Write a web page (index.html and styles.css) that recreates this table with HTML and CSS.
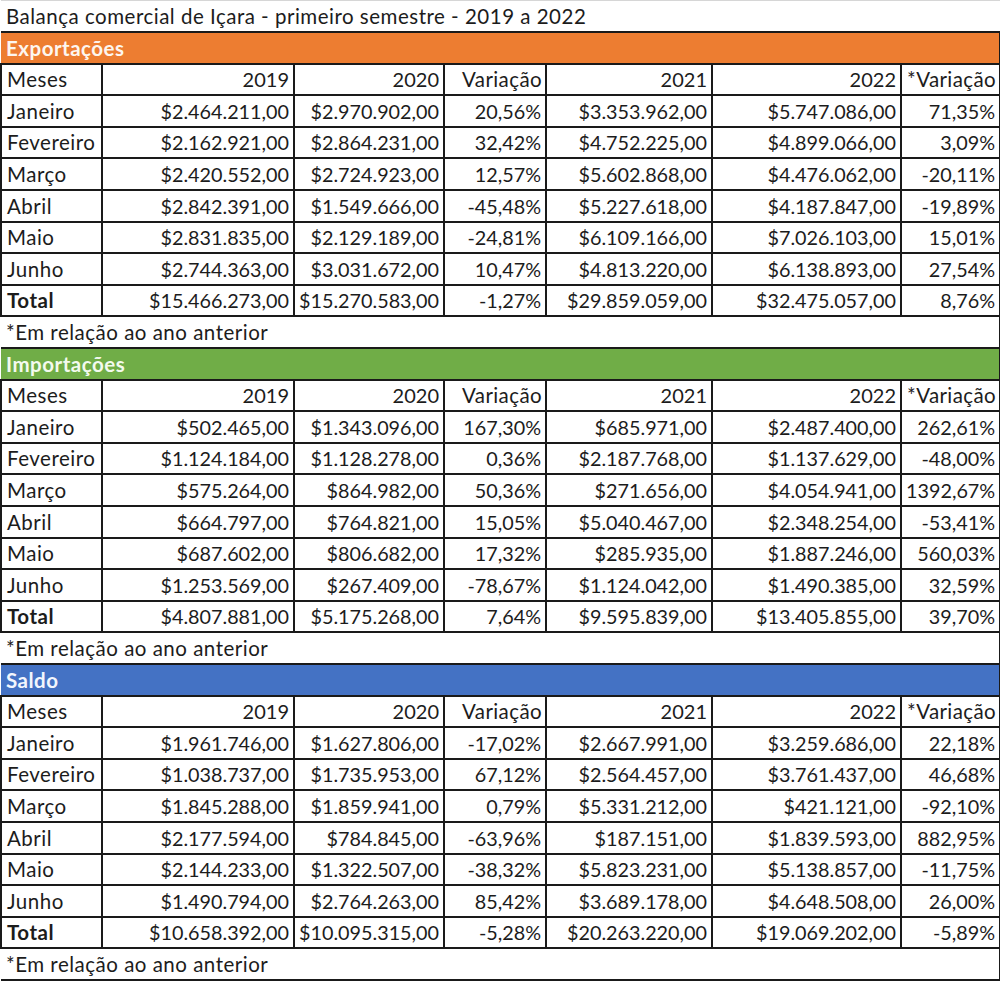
FILE: index.html
```html
<!DOCTYPE html>
<html lang="pt-BR">
<head>
<meta charset="utf-8">
<title>Balança comercial de Içara</title>
<link rel="stylesheet" href="styles.css">
</head>
<body>
<table class="sheet">
  <colgroup>
    <col class="c-mes"><col class="c-2019"><col class="c-2020"><col class="c-var"><col class="c-2021"><col class="c-2022"><col class="c-var2">
  </colgroup>
  <tbody>
    <tr class="title"><td colspan="7">Balança comercial de Içara - primeiro semestre - 2019 a 2022</td></tr>

    <tr class="band orange"><td colspan="7">Exportações</td></tr>
    <tr class="row head"><td class="l">Meses</td><td class="n">2019</td><td class="n">2020</td><td class="t">Variação</td><td class="n">2021</td><td class="n">2022</td><td class="t">*Variação</td></tr>
    <tr class="row"><td class="l">Janeiro</td><td>$2.464.211,00</td><td>$2.970.902,00</td><td>20,56%</td><td>$3.353.962,00</td><td>$5.747.086,00</td><td>71,35%</td></tr>
    <tr class="row"><td class="l">Fevereiro</td><td>$2.162.921,00</td><td>$2.864.231,00</td><td>32,42%</td><td>$4.752.225,00</td><td>$4.899.066,00</td><td>3,09%</td></tr>
    <tr class="row"><td class="l">Março</td><td>$2.420.552,00</td><td>$2.724.923,00</td><td>12,57%</td><td>$5.602.868,00</td><td>$4.476.062,00</td><td>-20,11%</td></tr>
    <tr class="row"><td class="l">Abril</td><td>$2.842.391,00</td><td>$1.549.666,00</td><td>-45,48%</td><td>$5.227.618,00</td><td>$4.187.847,00</td><td>-19,89%</td></tr>
    <tr class="row"><td class="l">Maio</td><td>$2.831.835,00</td><td>$2.129.189,00</td><td>-24,81%</td><td>$6.109.166,00</td><td>$7.026.103,00</td><td>15,01%</td></tr>
    <tr class="row"><td class="l">Junho</td><td>$2.744.363,00</td><td>$3.031.672,00</td><td>10,47%</td><td>$4.813.220,00</td><td>$6.138.893,00</td><td>27,54%</td></tr>
    <tr class="row"><td class="l b">Total</td><td>$15.466.273,00</td><td>$15.270.583,00</td><td>-1,27%</td><td>$29.859.059,00</td><td>$32.475.057,00</td><td>8,76%</td></tr>
    <tr class="note"><td colspan="7">*Em relação ao ano anterior</td></tr>

    <tr class="band green"><td colspan="7">Importações</td></tr>
    <tr class="row head"><td class="l">Meses</td><td class="n">2019</td><td class="n">2020</td><td class="t">Variação</td><td class="n">2021</td><td class="n">2022</td><td class="t">*Variação</td></tr>
    <tr class="row"><td class="l">Janeiro</td><td>$502.465,00</td><td>$1.343.096,00</td><td>167,30%</td><td>$685.971,00</td><td>$2.487.400,00</td><td>262,61%</td></tr>
    <tr class="row"><td class="l">Fevereiro</td><td>$1.124.184,00</td><td>$1.128.278,00</td><td>0,36%</td><td>$2.187.768,00</td><td>$1.137.629,00</td><td>-48,00%</td></tr>
    <tr class="row"><td class="l">Março</td><td>$575.264,00</td><td>$864.982,00</td><td>50,36%</td><td>$271.656,00</td><td>$4.054.941,00</td><td>1392,67%</td></tr>
    <tr class="row"><td class="l">Abril</td><td>$664.797,00</td><td>$764.821,00</td><td>15,05%</td><td>$5.040.467,00</td><td>$2.348.254,00</td><td>-53,41%</td></tr>
    <tr class="row"><td class="l">Maio</td><td>$687.602,00</td><td>$806.682,00</td><td>17,32%</td><td>$285.935,00</td><td>$1.887.246,00</td><td>560,03%</td></tr>
    <tr class="row"><td class="l">Junho</td><td>$1.253.569,00</td><td>$267.409,00</td><td>-78,67%</td><td>$1.124.042,00</td><td>$1.490.385,00</td><td>32,59%</td></tr>
    <tr class="row"><td class="l b">Total</td><td>$4.807.881,00</td><td>$5.175.268,00</td><td>7,64%</td><td>$9.595.839,00</td><td>$13.405.855,00</td><td>39,70%</td></tr>
    <tr class="note"><td colspan="7">*Em relação ao ano anterior</td></tr>

    <tr class="band blue"><td colspan="7">Saldo</td></tr>
    <tr class="row head"><td class="l">Meses</td><td class="n">2019</td><td class="n">2020</td><td class="t">Variação</td><td class="n">2021</td><td class="n">2022</td><td class="t">*Variação</td></tr>
    <tr class="row"><td class="l">Janeiro</td><td>$1.961.746,00</td><td>$1.627.806,00</td><td>-17,02%</td><td>$2.667.991,00</td><td>$3.259.686,00</td><td>22,18%</td></tr>
    <tr class="row"><td class="l">Fevereiro</td><td>$1.038.737,00</td><td>$1.735.953,00</td><td>67,12%</td><td>$2.564.457,00</td><td>$3.761.437,00</td><td>46,68%</td></tr>
    <tr class="row"><td class="l">Março</td><td>$1.845.288,00</td><td>$1.859.941,00</td><td>0,79%</td><td>$5.331.212,00</td><td>$421.121,00</td><td>-92,10%</td></tr>
    <tr class="row"><td class="l">Abril</td><td>$2.177.594,00</td><td>$784.845,00</td><td>-63,96%</td><td>$187.151,00</td><td>$1.839.593,00</td><td>882,95%</td></tr>
    <tr class="row"><td class="l">Maio</td><td>$2.144.233,00</td><td>$1.322.507,00</td><td>-38,32%</td><td>$5.823.231,00</td><td>$5.138.857,00</td><td>-11,75%</td></tr>
    <tr class="row"><td class="l">Junho</td><td>$1.490.794,00</td><td>$2.764.263,00</td><td>85,42%</td><td>$3.689.178,00</td><td>$4.648.508,00</td><td>26,00%</td></tr>
    <tr class="row"><td class="l b">Total</td><td>$10.658.392,00</td><td>$10.095.315,00</td><td>-5,28%</td><td>$20.263.220,00</td><td>$19.069.202,00</td><td>-5,89%</td></tr>
    <tr class="note"><td colspan="7">*Em relação ao ano anterior</td></tr>
  </tbody>
</table>
</body>
</html>
```

FILE: styles.css
```css
html, body {
  margin: 0;
  padding: 0;
  background: #ffffff;
}

.sheet {
  width: 999px;
  border-collapse: collapse;
  table-layout: fixed;
  font-family: Lato, "Liberation Sans", sans-serif;
  font-size: 19.8px;
  color: #1c1c1c;
}

.c-mes { width: 101px; }
.c-2019 { width: 192px; }
.c-2020 { width: 150px; }
.c-var { width: 102px; }
.c-2021 { width: 166px; }
.c-2022 { width: 189px; }
.c-var2 { width: 99px; }

.sheet tr {
  height: 31.6px;
}

.sheet td {
  padding: 0 4px 3px 4px;
  vertical-align: bottom;
  line-height: 24px;
  white-space: nowrap;
  overflow: visible;
}

/* wider text cells (labels) to mimic the spreadsheet font */
.title td,
.band td,
.note td,
.row td.l,
.row td.t {
  font-size: 20.5px;
  letter-spacing: 0.5px;
}

.row td.n {
  font-size: 20px;
}

.title td {
  padding-left: 5px;
  border-top: 1px solid #d6d6d6;
  border-bottom: 2px solid #1a1a1a;
}

.band td {
  padding-left: 5px;
  font-weight: bold;
  color: #fdf6ef;
  border-top: 2px solid #1a1a1a;
  border-bottom: 2px solid #1a1a1a;
  border-right: 2px solid #1a1a1a;
}

.orange td { background: #ed7d31; }
.green td { background: #70ad47; color: #f3faee; }
.blue td { background: #4472c4; color: #f2f6fd; }

.row td {
  border: 2px solid #1a1a1a;
  text-align: right;
}

.row td.t {
  padding-right: 3px;
  letter-spacing: 0.4px;
}

.row td.l {
  text-align: left;
  padding-left: 5px;
}

.row td.b {
  font-weight: bold;
}

.note td {
  padding-left: 5px;
  border-bottom: 2px solid #1a1a1a;
  border-right: 2px solid #1a1a1a;
}
```
